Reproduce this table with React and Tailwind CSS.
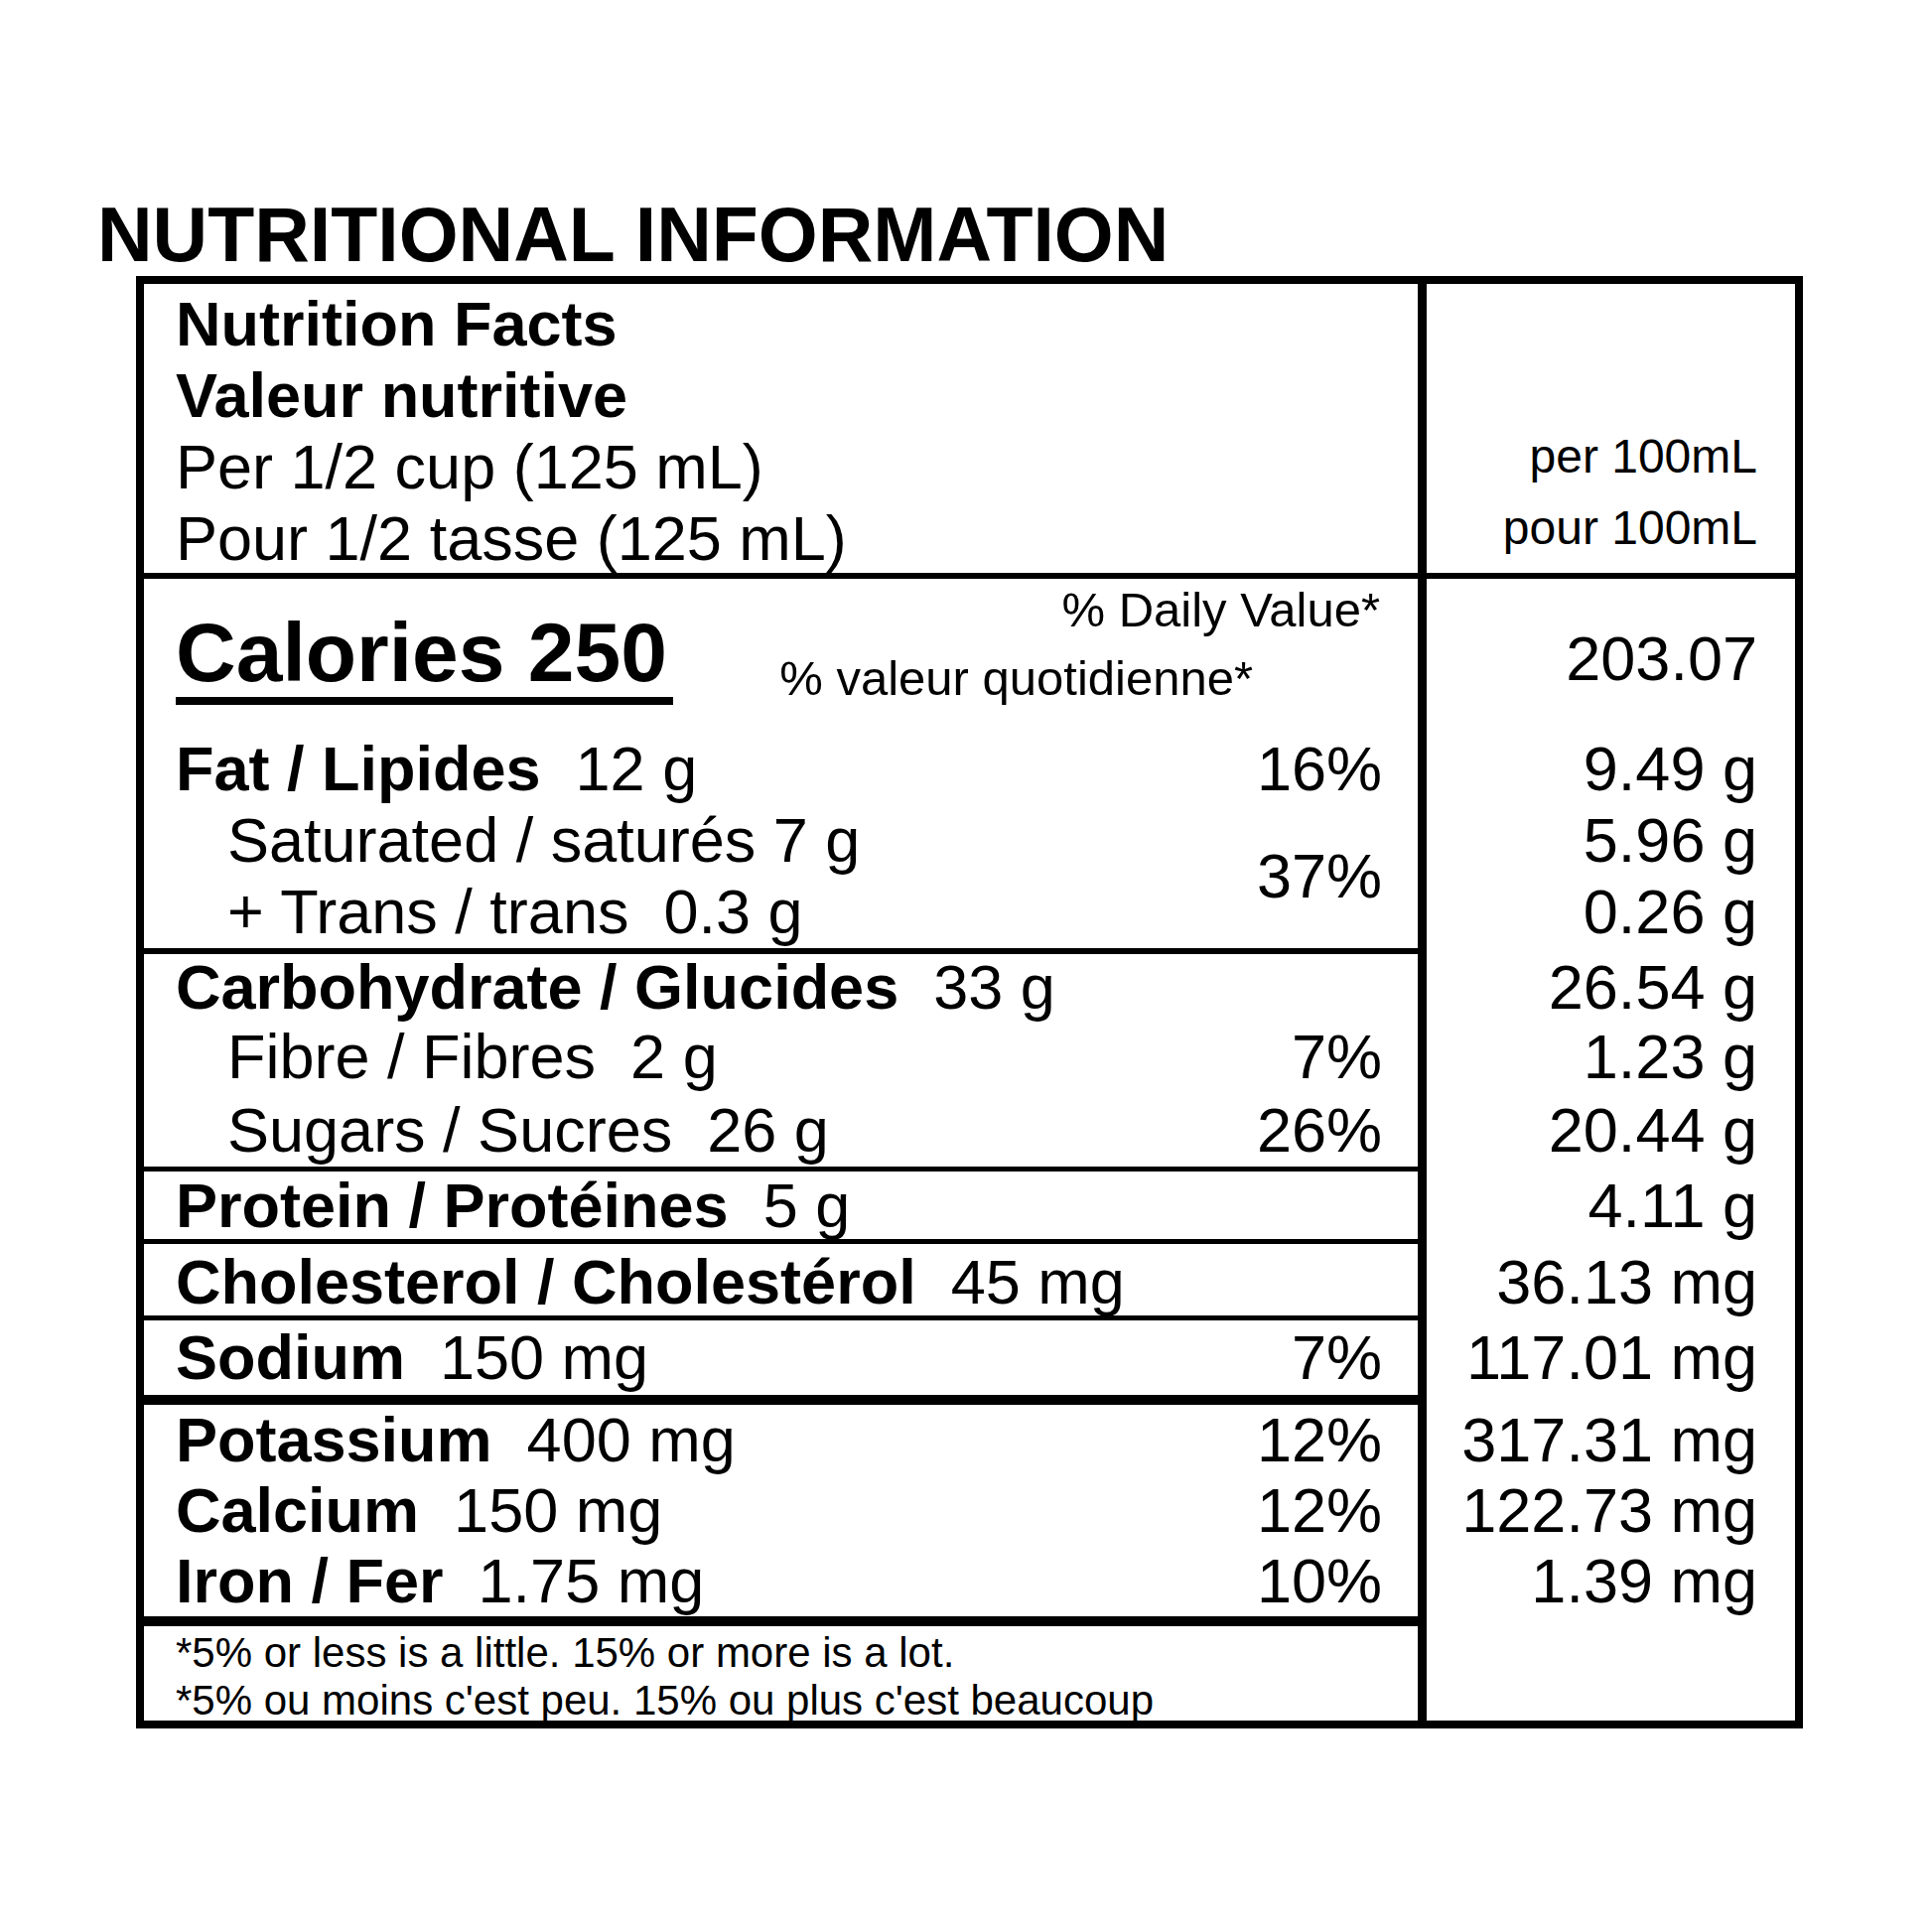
import React from "react";

function Label({ b, r }) {
  return (
    <span className="whitespace-pre">
      <span className="font-bold">{b}</span>
      {r}
    </span>
  );
}

function Row({ h, indent, children, pct }) {
  return (
    <div className={`flex justify-between pr-[36px] ${h} ${indent ? "pl-[84px]" : "pl-[32px]"}`}>
      <div className="whitespace-pre">{children}</div>
      {pct && <div>{pct}</div>}
    </div>
  );
}

function Val({ h, children }) {
  return <div className={`text-right pr-[38px] whitespace-pre ${h}`}>{children}</div>;
}

export default function App() {
  return (
    <div className="w-[1946px] h-[1946px] bg-white text-black [font-family:'Liberation_Sans',Arial,sans-serif]">
      <div className="pt-[196px] pl-[98px] text-[77px] leading-[80px] font-bold">NUTRITIONAL INFORMATION</div>

      <div className="mt-[2px] ml-[137px] w-[1679px] border-[8px] border-black text-[63px]">
        {/* header */}
        <div className="flex">
          <div className="w-[1283px] h-[297px] border-b-[6px] border-black pl-[32px] pt-[4px] leading-[72px]">
            <div className="font-bold">Nutrition Facts</div>
            <div className="font-bold">Valeur nutritive</div>
            <div>Per 1/2 cup (125 mL)</div>
            <div>Pour 1/2 tasse (125 mL)</div>
          </div>
          <div className="flex-1 border-l-[9px] border-b-[6px] border-black pt-[138px] pr-[38px] text-right text-[48px] leading-[72px]">
            <div>per 100mL</div>
            <div>pour 100mL</div>
          </div>
        </div>

        {/* calories + fat */}
        <div className="flex">
          <div className="w-[1283px] h-[378px] border-b-[6px] border-black">
            <div className="h-[155px] flex items-start justify-between">
              <div className="flex mt-[29px] pl-[32px]">
                <span className="text-[84px] leading-[90px] font-bold border-b-[8px] border-black pr-[6px]">Calories 250</span>
              </div>
              <div className="pt-[3px] pr-[38px] text-[49px] text-right">
                <div className="h-[56px] leading-[56px]">% Daily Value*</div>
                <div className="mt-[13px] mr-[128px] h-[56px] leading-[56px]">% valeur quotidienne*</div>
              </div>
            </div>
            <Row h="h-[72px] leading-[72px]" pct="16%">
              <Label b="Fat / Lipides" r="  12 g" />
            </Row>
            <div className="flex">
              <div className="flex-1 pl-[84px]">
                <div className="h-[72px] leading-[72px] whitespace-pre">Saturated / saturés 7 g</div>
                <div className="h-[72px] leading-[72px] whitespace-pre">+ Trans / trans  0.3 g</div>
              </div>
              <div className="flex items-center pr-[36px]">
                <div className="leading-[72px]">37%</div>
              </div>
            </div>
          </div>
          <div className="flex-1 border-l-[9px] border-black">
            <div className="h-[155px] pt-[44px] pr-[38px] text-right leading-[72px]">203.07</div>
            <Val h="h-[72px] leading-[72px]">9.49 g</Val>
            <Val h="h-[72px] leading-[72px]">5.96 g</Val>
            <Val h="h-[72px] leading-[72px]">0.26 g</Val>
          </div>
        </div>

        {/* carbohydrate */}
        <div className="flex">
          <div className="w-[1283px] h-[219px] border-b-[5px] border-black">
            <Row h="h-[66px] leading-[66px]">
              <Label b="Carbohydrate / Glucides" r="  33 g" />
            </Row>
            <Row h="h-[74px] leading-[74px]" indent pct="7%">Fibre / Fibres  2 g</Row>
            <Row h="h-[74px] leading-[74px]" indent pct="26%">Sugars / Sucres  26 g</Row>
          </div>
          <div className="flex-1 border-l-[9px] border-black">
            <Val h="h-[66px] leading-[66px]">26.54 g</Val>
            <Val h="h-[74px] leading-[74px]">1.23 g</Val>
            <Val h="h-[74px] leading-[74px]">20.44 g</Val>
          </div>
        </div>

        {/* protein */}
        <div className="flex">
          <div className="w-[1283px] h-[73px] border-b-[5px] border-black">
            <Row h="h-[68px] leading-[68px]">
              <Label b="Protein / Protéines" r="  5 g" />
            </Row>
          </div>
          <div className="flex-1 border-l-[9px] border-black">
            <Val h="h-[68px] leading-[68px]">4.11 g</Val>
          </div>
        </div>

        {/* cholesterol */}
        <div className="flex">
          <div className="w-[1283px] h-[77px] border-b-[5px] border-black">
            <Row h="h-[72px] leading-[76px]">
              <Label b="Cholesterol / Cholestérol" r="  45 mg" />
            </Row>
          </div>
          <div className="flex-1 border-l-[9px] border-black">
            <Val h="h-[72px] leading-[76px]">36.13 mg</Val>
          </div>
        </div>

        {/* sodium */}
        <div className="flex">
          <div className="w-[1283px] h-[85px] border-b-[10px] border-black">
            <Row h="h-[75px] leading-[75px]" pct="7%">
              <Label b="Sodium" r="  150 mg" />
            </Row>
          </div>
          <div className="flex-1 border-l-[9px] border-black">
            <Val h="h-[75px] leading-[75px]">117.01 mg</Val>
          </div>
        </div>

        {/* minerals */}
        <div className="flex">
          <div className="w-[1283px] h-[223px] border-b-[10px] border-black">
            <Row h="h-[71px] leading-[71px]" pct="12%">
              <Label b="Potassium" r="  400 mg" />
            </Row>
            <Row h="h-[70px] leading-[70px]" pct="12%">
              <Label b="Calcium" r="  150 mg" />
            </Row>
            <Row h="h-[72px] leading-[72px]" pct="10%">
              <Label b="Iron / Fer" r="  1.75 mg" />
            </Row>
          </div>
          <div className="flex-1 border-l-[9px] border-black">
            <Val h="h-[71px] leading-[71px]">317.31 mg</Val>
            <Val h="h-[70px] leading-[70px]">122.73 mg</Val>
            <Val h="h-[72px] leading-[72px]">1.39 mg</Val>
          </div>
        </div>

        {/* footnote */}
        <div className="flex">
          <div className="w-[1283px] h-[95px] pl-[32px] text-[42px]">
            <div className="h-[54px] leading-[54px]">*5% or less is a little. 15% or more is a lot.</div>
            <div className="h-[41px] leading-[42px]">*5% ou moins c'est peu. 15% ou plus c'est beaucoup</div>
          </div>
          <div className="flex-1 border-l-[9px] border-black"></div>
        </div>
      </div>
    </div>
  );
}
